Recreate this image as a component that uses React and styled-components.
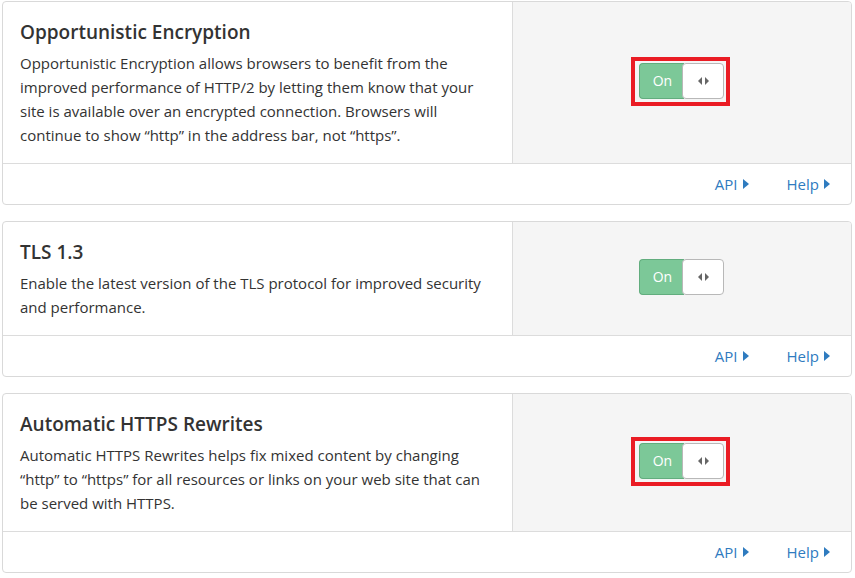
import React from "react"
import styled, { createGlobalStyle } from "styled-components"

const GlobalStyle = createGlobalStyle`
  html, body {
    margin: 0;
    padding: 0;
    background: #fff;
  }
  body {
    font-family: "Segoe UI", "Open Sans", sans-serif;
    color: #333;
  }
`

const Page = styled.div`
  padding: 1px 3px 0 2px;
  display: flex;
  flex-direction: column;
  gap: 16px;
`

const Card = styled.section`
  border: 1px solid #d9d9d9;
  border-radius: 4px;
  background: #fff;
  overflow: hidden;
`

const Body = styled.div`
  display: flex;
`

const Info = styled.div`
  flex: 0 0 60%;
  box-sizing: border-box;
  padding: 16px 16px 16px 17px;
`

const Title = styled.h3`
  margin: 0 0 5px;
  font-size: 19px;
  line-height: 28px;
  font-weight: 600;
  color: #333;
`

const Text = styled.p`
  margin: 0;
  font-size: 15px;
  line-height: 24px;
  color: #333;
`

const Control = styled.div`
  flex: 1;
  background: #f5f5f5;
  border-left: 1px solid #dcdcdc;
  display: flex;
  align-items: center;
  justify-content: center;
  padding-bottom: 4px;
`

const Toggle = styled.div`
  position: relative;
  display: flex;
  width: 85px;
  height: 36px;
  box-sizing: border-box;
  border-radius: 4px;

  &::after {
    content: "";
    display: ${p => (p.marked ? "block" : "none")};
    position: absolute;
    top: -6px;
    bottom: -7px;
    left: -8px;
    right: -6px;
    border: 4px solid #ea1c24;
    pointer-events: none;
  }
`

const OnPart = styled.div`
  width: 44px;
  background: #7cc898;
  border: 1px solid #62ad7e;
  border-right: none;
  border-radius: 4px 0 0 4px;
  color: #fff;
  font-size: 14px;
  display: flex;
  align-items: center;
  justify-content: center;
`

const Knob = styled.div`
  flex: 1;
  background: #fff;
  border: 1px solid #b8b8b8;
  border-radius: 4px;
  margin-left: -2px;
  display: flex;
  align-items: center;
  justify-content: center;
`

const Footer = styled.div`
  border-top: 1px solid #dcdcdc;
  height: 40px;
  display: flex;
  align-items: center;
  justify-content: flex-end;
  gap: 38px;
  padding-right: 21px;
`

const LinkItem = styled.a`
  color: #2f7bbf;
  font-size: 15px;
  text-decoration: none;
  display: inline-flex;
  align-items: center;
  gap: 5px;
  cursor: pointer;
`

const Arrows = () => (
  <svg width="11" height="8" viewBox="0 0 11 8">
    <path d="M4 0 L4 8 L0 4 Z" fill="#666" />
    <path d="M7 0 L7 8 L11 4 Z" fill="#666" />
  </svg>
)

const Caret = () => (
  <svg width="6" height="10" viewBox="0 0 6 10">
    <path d="M0 0 L6 5 L0 10 Z" fill="#2f7bbf" />
  </svg>
)

const settings = [
  {
    title: "Opportunistic Encryption",
    text: "Opportunistic Encryption allows browsers to benefit from the improved performance of HTTP/2 by letting them know that your site is available over an encrypted connection. Browsers will continue to show \u201chttp\u201d in the address bar, not \u201chttps\u201d.",
    marked: true
  },
  {
    title: "TLS 1.3",
    text: "Enable the latest version of the TLS protocol for improved security and performance.",
    marked: false
  },
  {
    title: "Automatic HTTPS Rewrites",
    text: "Automatic HTTPS Rewrites helps fix mixed content by changing \u201chttp\u201d to \u201chttps\u201d for all resources or links on your web site that can be served with HTTPS.",
    marked: true
  }
]

function Setting({ title, text, marked }) {
  return (
    <Card>
      <Body>
        <Info>
          <Title>{title}</Title>
          <Text>{text}</Text>
        </Info>
        <Control>
          <Toggle marked={marked ? 1 : 0}>
            <OnPart>On</OnPart>
            <Knob>
              <Arrows />
            </Knob>
          </Toggle>
        </Control>
      </Body>
      <Footer>
        <LinkItem>
          API <Caret />
        </LinkItem>
        <LinkItem>
          Help <Caret />
        </LinkItem>
      </Footer>
    </Card>
  )
}

export default function App() {
  return (
    <>
      <GlobalStyle />
      <Page>
        {settings.map(s => (
          <Setting key={s.title} {...s} />
        ))}
      </Page>
    </>
  )
}
